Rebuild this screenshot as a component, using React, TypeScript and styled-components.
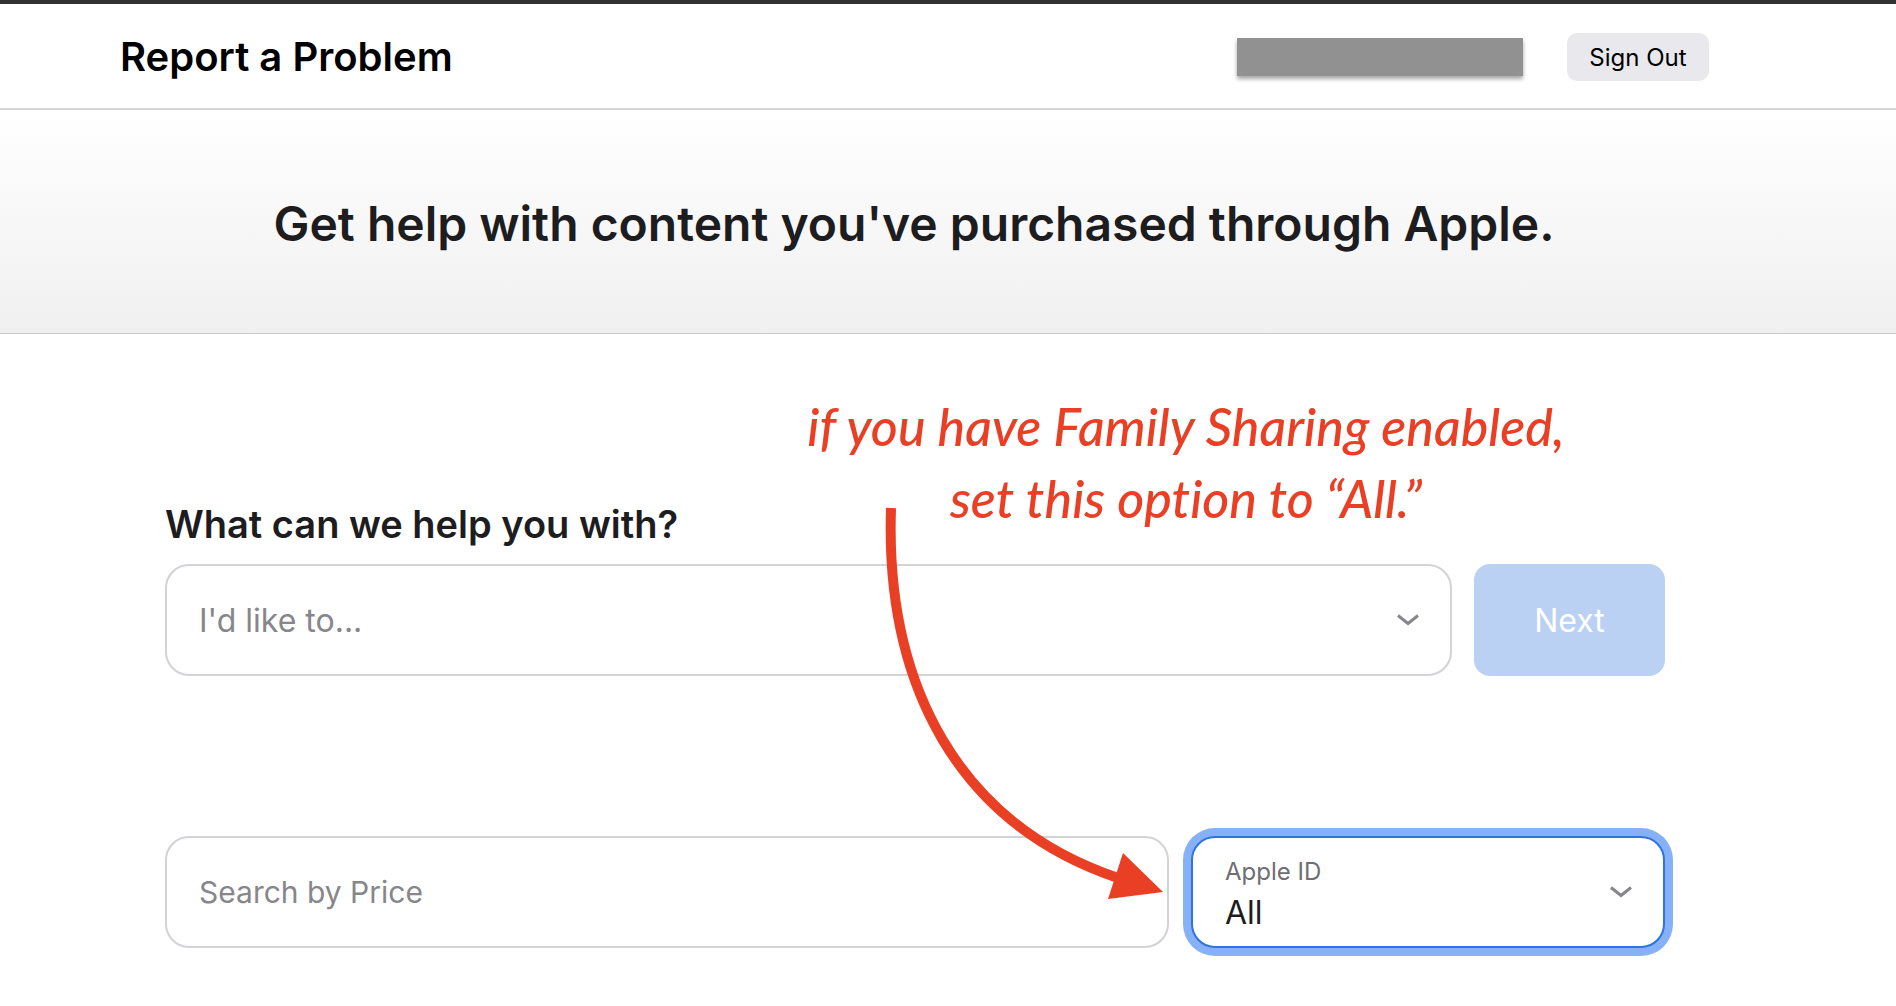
import React from 'react';
import styled, { createGlobalStyle } from 'styled-components';

const GlobalStyle = createGlobalStyle`
  *, *::before, *::after { box-sizing: border-box; }
  body {
    margin: 0;
    background: #fff;
    color: #1d1d1f;
    font-family: Inter, 'Liberation Sans', sans-serif;
  }
  h1, h2, p { margin: 0; }
  button, input, select { font: inherit; margin: 0; }
`;

const Header = styled.header`
  display: flex;
  align-items: center;
  gap: 44px;
  height: 110px;
  padding: 2px 187px 0 120px;
  border-top: 4px solid #333;
  border-bottom: 2px solid #d6d6d6;
`;

const SiteTitle = styled.p`
  margin-right: auto;
  color: #000;
  font-size: 40px;
  font-weight: 600;
  line-height: 48px;
`;

const AccountName = styled.div`
  width: 286px;
  height: 38px;
  background: #919191;
  box-shadow: 0 3px 4px rgba(0, 0, 0, 0.35);
`;

const SignOutButton = styled.button`
  width: 142px;
  height: 48px;
  padding: 0;
  border: 0;
  border-radius: 10px;
  background: #e8e8ed;
  color: #000;
  font-size: 24px;
`;

const Hero = styled.section`
  padding: 82px 233px 77px 165px;
  border-bottom: 1px solid #c8c8cc;
  background: linear-gradient(#fff, #f0f0f0);
  text-align: center;
`;

const HeroTitle = styled.h1`
  font-size: 48px;
  font-weight: 600;
  line-height: 64px;
  white-space: nowrap;
`;

const Main = styled.main`
  position: relative;
  display: flex;
  flex-direction: column;
  gap: 160px;
  padding: 166px 231px 58px 165px;
`;

const Row = styled.div<{ $gap: number }>`
  display: flex;
  gap: ${({ $gap }) => $gap}px;
`;

const Question = styled.h2`
  margin-bottom: 16px;
  font-size: 38px;
  font-weight: 600;
  line-height: 48px;
`;

const Field = styled.div<{ $width?: number }>`
  display: grid;
  align-items: center;
  flex: ${({ $width }) => ($width ? `0 0 ${$width}px` : '1 1 0')};

  > * { grid-area: 1 / 1; }
`;

const control = `
  width: 100%;
  height: 112px;
  padding: 0 32px;
  border: 2px solid #d2d2d7;
  border-radius: 24px;
  background: #fff;
  color: #86868b;
  font-size: 32px;
  outline: none;
  appearance: none;
`;

const TextInput = styled.input`
  ${control}
  font-size: 30px;
  &::placeholder { color: #86868b; opacity: 1; }
`;

const Select = styled.select<{ $focused?: boolean }>`
  ${control}
  ${({ $focused }) =>
    $focused &&
    `
    padding-top: 40px;
    border-color: #2f73de;
    color: #1d1d1f;
    box-shadow: 0 0 0 8px #86b1f8;
  `}
`;

const FloatingLabel = styled.label`
  align-self: start;
  padding: 20px 34px 0;
  color: #6e6e73;
  font-size: 24px;
  line-height: 32px;
  pointer-events: none;
  z-index: 1;
`;

const Chevron = styled.svg`
  justify-self: end;
  width: 24px;
  height: 14px;
  margin-right: 32px;
  pointer-events: none;
  z-index: 1;
`;

const NextButton = styled.button`
  width: 191px;
  height: 112px;
  padding: 0;
  border: 0;
  border-radius: 16px;
  background: #bbd1f3;
  color: #fff;
  font-size: 32px;
`;

const Note = styled.p`
  position: absolute;
  top: 56px;
  left: 786px;
  width: 800px;
  color: #e94025;
  font-family: Lato, sans-serif;
  font-size: 52px;
  font-style: italic;
  font-weight: 500;
  font-variant-ligatures: none;
  line-height: 72px;
  text-align: center;
  z-index: 2;
`;

const Arrow = styled.svg`
  position: absolute;
  top: 166px;
  left: 880px;
  width: 290px;
  height: 410px;
  pointer-events: none;
  z-index: 2;
`;

function ChevronIcon() {
  return (
    <Chevron viewBox="0 0 24 14" aria-hidden="true">
      <path d="M2 2.5 12 10.5 22 2.5" fill="none" stroke="#86868b" strokeWidth="3" />
    </Chevron>
  );
}

export default function App() {
  return (
    <>
      <GlobalStyle />
      <Header>
        <SiteTitle>Report a Problem</SiteTitle>
        <AccountName />
        <SignOutButton type="button">Sign Out</SignOutButton>
      </Header>
      <Hero>
        <HeroTitle>Get help with content you've purchased through Apple.</HeroTitle>
      </Hero>
      <Main>
        <section>
          <Question id="question">What can we help you with?</Question>
          <Row $gap={22}>
            <Field>
              <Select aria-labelledby="question">
                <option>I'd like to...</option>
              </Select>
              <ChevronIcon />
            </Field>
            <NextButton type="button">Next</NextButton>
          </Row>
        </section>
        <Row $gap={22}>
          <Field>
            <TextInput type="text" aria-label="Search by Price" placeholder="Search by Price" />
          </Field>
          <Field $width={474}>
            <FloatingLabel htmlFor="apple-id">Apple ID</FloatingLabel>
            <Select id="apple-id" $focused>
              <option>All</option>
            </Select>
            <ChevronIcon />
          </Field>
        </Row>
        <Note>
          if you have Family Sharing enabled,
          <br />
          set this option to “All.”
        </Note>
        <Arrow viewBox="880 500 290 410" aria-hidden="true">
          <path d="M891 508C885 685 958 824 1118 878" fill="none" stroke="#e94025" strokeWidth="10" />
          <path d="M1123 853 1163 892 1108 899Z" fill="#e94025" />
        </Arrow>
      </Main>
    </>
  );
}
